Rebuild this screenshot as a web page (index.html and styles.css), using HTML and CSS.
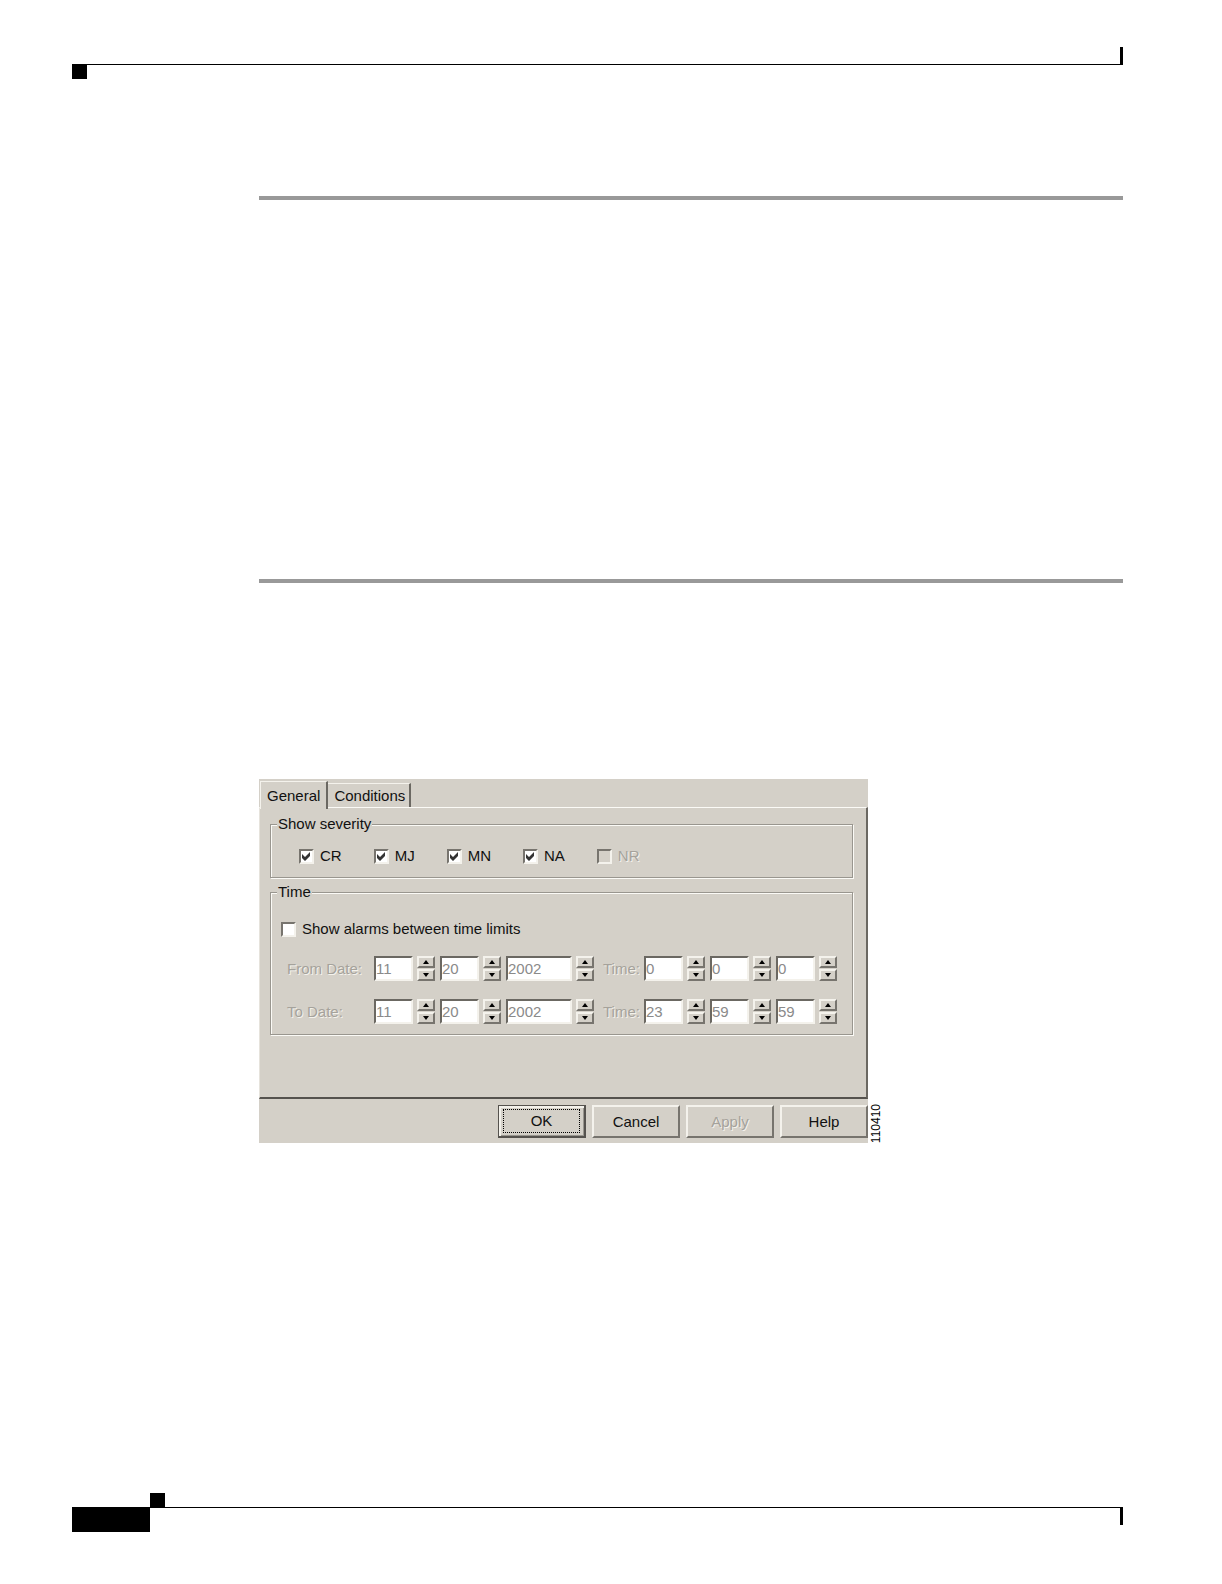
FILE: index.html
```html
<!DOCTYPE html>
<html lang="en">
<head>
    <meta charset="UTF-8">
    <meta name="viewport" content="width=device-width, initial-scale=1.0">
    <title>Alarm Filter</title>
    <link rel="stylesheet" href="styles.css">
</head>
<body>
    <header class="header">
        <div class="header-tick"></div>
        <div class="header-square"></div>
    </header>

    <main class="content">
        <hr class="rule rule-first">
        <hr class="rule rule-second">

        <figure class="figure">
            <form class="dialog">
                <div class="tabs" role="tablist">
                    <button type="button" class="tab active" role="tab" aria-selected="true">General</button>
                    <button type="button" class="tab" role="tab" aria-selected="false">Conditions</button>
                </div>

                <div class="panel" role="tabpanel">
                    <fieldset class="group">
                        <legend>Show severity</legend>
                        <div class="severity">
                            <label class="check"><input type="checkbox" checked>CR</label>
                            <label class="check"><input type="checkbox" checked>MJ</label>
                            <label class="check"><input type="checkbox" checked>MN</label>
                            <label class="check"><input type="checkbox" checked>NA</label>
                            <label class="check disabled"><input type="checkbox" disabled>NR</label>
                        </div>
                    </fieldset>

                    <fieldset class="group time">
                        <legend>Time</legend>
                        <label class="check"><input type="checkbox" id="limits">Show alarms between time limits</label>
                        <div class="limits">
                            <div class="row">
                                <label class="date-label" for="fromMonth">From Date:</label>
                                <div class="spinner">
                                    <input type="text" id="fromMonth" value="11" disabled>
                                    <div class="arrows"><button type="button" class="up" aria-label="Up"></button><button type="button" class="down" aria-label="Down"></button></div>
                                </div>
                                <div class="spinner">
                                    <input type="text" aria-label="From day" value="20" disabled>
                                    <div class="arrows"><button type="button" class="up" aria-label="Up"></button><button type="button" class="down" aria-label="Down"></button></div>
                                </div>
                                <div class="spinner year">
                                    <input type="text" aria-label="From year" value="2002" disabled>
                                    <div class="arrows"><button type="button" class="up" aria-label="Up"></button><button type="button" class="down" aria-label="Down"></button></div>
                                </div>
                                <label class="time-label" for="fromHour">Time:</label>
                                <div class="spinner">
                                    <input type="text" id="fromHour" value="0" disabled>
                                    <div class="arrows"><button type="button" class="up" aria-label="Up"></button><button type="button" class="down" aria-label="Down"></button></div>
                                </div>
                                <div class="spinner">
                                    <input type="text" aria-label="From minute" value="0" disabled>
                                    <div class="arrows"><button type="button" class="up" aria-label="Up"></button><button type="button" class="down" aria-label="Down"></button></div>
                                </div>
                                <div class="spinner">
                                    <input type="text" aria-label="From second" value="0" disabled>
                                    <div class="arrows"><button type="button" class="up" aria-label="Up"></button><button type="button" class="down" aria-label="Down"></button></div>
                                </div>
                            </div>
                            <div class="row">
                                <label class="date-label" for="toMonth">To Date:</label>
                                <div class="spinner">
                                    <input type="text" id="toMonth" value="11" disabled>
                                    <div class="arrows"><button type="button" class="up" aria-label="Up"></button><button type="button" class="down" aria-label="Down"></button></div>
                                </div>
                                <div class="spinner">
                                    <input type="text" aria-label="To day" value="20" disabled>
                                    <div class="arrows"><button type="button" class="up" aria-label="Up"></button><button type="button" class="down" aria-label="Down"></button></div>
                                </div>
                                <div class="spinner year">
                                    <input type="text" aria-label="To year" value="2002" disabled>
                                    <div class="arrows"><button type="button" class="up" aria-label="Up"></button><button type="button" class="down" aria-label="Down"></button></div>
                                </div>
                                <label class="time-label" for="toHour">Time:</label>
                                <div class="spinner">
                                    <input type="text" id="toHour" value="23" disabled>
                                    <div class="arrows"><button type="button" class="up" aria-label="Up"></button><button type="button" class="down" aria-label="Down"></button></div>
                                </div>
                                <div class="spinner">
                                    <input type="text" aria-label="To minute" value="59" disabled>
                                    <div class="arrows"><button type="button" class="up" aria-label="Up"></button><button type="button" class="down" aria-label="Down"></button></div>
                                </div>
                                <div class="spinner">
                                    <input type="text" aria-label="To second" value="59" disabled>
                                    <div class="arrows"><button type="button" class="up" aria-label="Up"></button><button type="button" class="down" aria-label="Down"></button></div>
                                </div>
                            </div>
                        </div>
                    </fieldset>
                </div>

                <div class="actions">
                    <button type="button" class="btn default"><span>OK</span></button>
                    <button type="button" class="btn">Cancel</button>
                    <button type="button" class="btn" disabled>Apply</button>
                    <button type="button" class="btn">Help</button>
                </div>
            </form>
            <figcaption class="number">110410</figcaption>
        </figure>
    </main>

    <footer class="footer">
        <div class="footer-square"></div>
        <div class="footer-line">
            <div class="footer-block"></div>
            <div class="footer-tick"></div>
        </div>
    </footer>
</body>
</html>
```

FILE: styles.css
```css
* {
    box-sizing: border-box;
    margin: 0;
    padding: 0;
}

body {
    display: flex;
    flex-direction: column;
    min-height: 100vh;
    padding: 47px 99px 52px 72px;
    background-color: #fff;
    color: #111;
    font-family: "Liberation Sans", Arial, sans-serif;
    font-size: 15px;
    line-height: 18px;
}

button, input {
    font: inherit;
    color: inherit;
}

/* Page header */
.header-tick {
    height: 17px;
    border-right: 3px solid #000;
}

.header-square {
    height: 15px;
    border-top: 1px solid #000;
    background: linear-gradient(#000, #000) no-repeat 0 0 / 15px 15px;
}

/* Content */
.content {
    padding-left: 187px;
}

.rule {
    height: 4px;
    border: 0;
    background-color: #999;
}

.rule-first {
    margin-top: 117px;
}

.rule-second {
    margin-top: 379px;
}

.figure {
    display: flex;
    align-items: flex-end;
    gap: 2px;
    margin-top: 196px;
}

.number {
    writing-mode: vertical-rl;
    transform: rotate(180deg);
    font-size: 12px;
    line-height: 12px;
    color: #000;
}

/* Dialog */
.dialog {
    flex: 0 1 609px;
    background-color: #d4d0c8;
}

.tabs {
    display: flex;
    align-items: flex-end;
    padding: 2px 0 0 1px;
}

.tab {
    height: 24px;
    padding: 0 4px 0 6px;
    border: solid;
    border-width: 1px 2px 0 0;
    border-color: #f4f2ec #6b6862;
    background-color: #d4d0c8;
    line-height: 24px;
}

.tab.active {
    position: relative;
    height: 28px;
    margin-bottom: -2px;
    padding: 0 6px;
    border-left: 1px solid #f4f2ec;
    line-height: 24px;
}

.panel {
    min-height: 292px;
    padding: 7px 13px 0 10px;
    border: solid;
    border-width: 1px 2px 2px 1px;
    border-color: #fbfaf6 #6b6862 #55524e #e6e3dc;
}

.group {
    height: 63px;
    padding: 0 10px;
    border: 1px solid #99968f;
    box-shadow: 1px 1px 0 #fbfaf6, inset 1px 1px 0 #fbfaf6;
}

.group legend {
    background-color: #d4d0c8;
    margin-left: -4px;
    padding: 0 1px;
}

.severity {
    display: flex;
    gap: 32px;
    padding: 14px 0 0 18px;
}

.check {
    display: flex;
    align-items: center;
    gap: 6px;
}

.check input {
    appearance: none;
    width: 15px;
    height: 15px;
    border: 2px solid;
    border-color: #77746e #f4f2ec #f4f2ec #77746e;
    background-color: #fff;
}

.check input:checked {
    background-image: url("data:image/svg+xml,%3Csvg xmlns='http://www.w3.org/2000/svg' viewBox='0 0 11 11'%3E%3Cpath d='M1 3l3 3 5-5v4L4 10 1 7z' fill='%23333'/%3E%3C/svg%3E");
}

.check input:disabled {
    background-color: #d4d0c8;
}

.disabled, .date-label, .time-label, .btn:disabled {
    color: #a5a29b;
    text-shadow: 1px 1px 0 #f4f2ec;
}

.time {
    height: 152px;
    margin-top: 5px;
}

.time > .check {
    margin-top: 19px;
}

.limits {
    display: flex;
    flex-direction: column;
    gap: 18px;
    margin-top: 18px;
    padding-left: 6px;
}

.row {
    display: flex;
    align-items: center;
    gap: 5px;
}

.date-label {
    width: 82px;
}

.time-label {
    width: 40px;
    padding-left: 4px;
}

.spinner {
    display: flex;
    gap: 4px;
}

.spinner input {
    width: 39px;
    height: 25px;
    border: 2px solid;
    border-color: #6b6862 #f4f2ec #f4f2ec #6b6862;
    background-color: #fff;
    color: #8a8a8a;
}

.spinner.year input {
    width: 66px;
}

.arrows {
    display: flex;
    flex-direction: column;
    gap: 1px;
}

.arrows button {
    display: flex;
    align-items: center;
    justify-content: center;
    width: 18px;
    height: 12px;
    border: 2px solid;
    border-color: #f4f2ec #77746e #77746e #f4f2ec;
    background-color: #d4d0c8;
}

.arrows button::before {
    content: "";
    border: 3px solid transparent;
}

.arrows .up::before {
    border-top: 0;
    border-bottom: 4px solid #000;
}

.arrows .down::before {
    border-bottom: 0;
    border-top: 4px solid #000;
}

.actions {
    display: flex;
    justify-content: flex-end;
    gap: 6px;
    padding: 6px 0 5px;
}

.btn {
    width: 88px;
    height: 33px;
    border: 2px solid;
    border-color: #f4f2ec #77746e #77746e #f4f2ec;
    background-color: #d4d0c8;
}

.btn.default {
    padding: 2px;
    border-color: #55524e;
    border-width: 1px 2px 2px 1px;
    box-shadow: inset 2px 2px 0 #f4f2ec, inset -1px -1px 0 #99968f;
}

.btn.default span {
    display: block;
    margin: 1px 2px;
    border: 1px dotted #000;
    line-height: 22px;
}

/* Page footer */
.footer {
    margin-top: auto;
}

.footer-square {
    width: 15px;
    height: 14px;
    margin-left: 78px;
    background-color: #000;
}

.footer-line {
    display: flex;
    justify-content: space-between;
    border-top: 1px solid #000;
}

.footer-block {
    width: 78px;
    height: 24px;
    background-color: #000;
}

.footer-tick {
    width: 3px;
    height: 17px;
    background-color: #000;
}
```
